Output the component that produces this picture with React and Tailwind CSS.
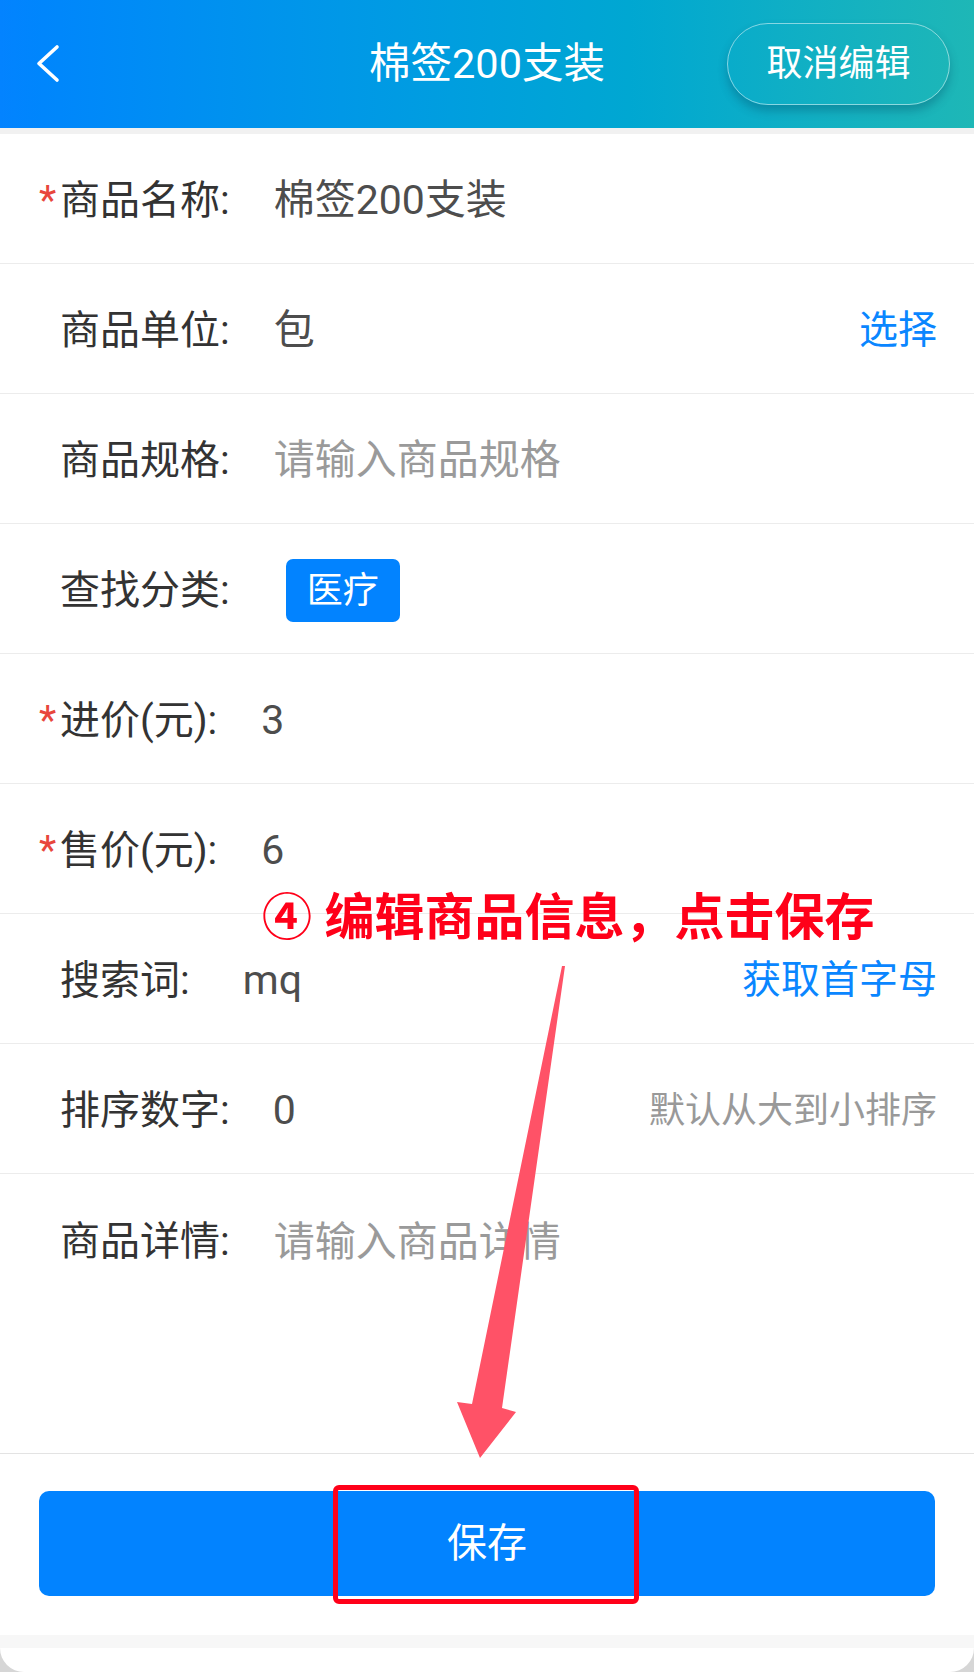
import React from 'react';

const rows = [
  { label: '商品名称:', required: true, value: '棉签200支装', gap: 'ml-[44px]' },
  { label: '商品单位:', value: '包', gap: 'ml-[44px]', action: '选择' },
  { label: '商品规格:', placeholder: '请输入商品规格', gap: 'ml-[44px]' },
  { label: '查找分类:', tag: '医疗', gap: 'ml-[56px]' },
  { label: '进价(元):', required: true, value: '3', gap: 'ml-[44px]' },
  { label: '售价(元):', required: true, value: '6', gap: 'ml-[44px]' },
  { label: '搜索词:', value: 'mq', gap: 'ml-[53px]', action: '获取首字母' },
  { label: '排序数字:', value: '0', gap: 'ml-[43px]', hint: '默认从大到小排序' },
];

function Row({ label, required, value, placeholder, tag, gap, action, hint }) {
  return (
    <div className="h-[130px] flex items-center pt-[4px] pl-[39px] pr-[37px] border-b border-[#ececec]">
      <span className="w-[21px] text-[40px] text-[#e8463c] leading-none">{required ? '*' : ''}</span>
      <span className="text-[40px] text-[#333333]">{label}</span>
      <div className={gap}>
        {tag ? (
          <span className="inline-flex items-center justify-center h-[63px] w-[114px] rounded-[7px] bg-[#0283ff] text-white text-[36px]">
            {tag}
          </span>
        ) : placeholder ? (
          <span className="text-[41px] text-[#9a9a9a]">{placeholder}</span>
        ) : (
          <span className="text-[41px] text-[#4d4d4d]">{value}</span>
        )}
      </div>
      {action && <span className="ml-auto text-[39px] text-[#0a86ff]">{action}</span>}
      {hint && <span className="ml-auto text-[36px] text-[#999999]">{hint}</span>}
    </div>
  );
}

export default function App() {
  return (
    <div
      className="relative w-[974px] h-[1672px] overflow-hidden bg-[#d6d6d6] flex flex-col"
      style={{ fontFamily: 'Roboto, "Noto Sans CJK SC", sans-serif' }}
    >
      <header className="h-[128px] shrink-0 grid grid-cols-[1fr_auto_1fr] items-center bg-linear-to-r from-[#0383ff] to-[#1eb7b6]">
        <div className="pl-[36px] flex items-center">
          <svg width="24" height="40" viewBox="0 0 24 40" fill="none" stroke="white" strokeWidth="3.6" strokeLinecap="round" strokeLinejoin="round">
            <path d="M21 3 L3 19.5 L21 36" />
          </svg>
        </div>
        <h1 className="text-[41.5px] text-white font-normal">棉签200支装</h1>
        <div className="flex justify-end pr-[24px]">
          <button className="w-[223px] h-[82px] rounded-full border border-white/50 text-white text-[36px] shadow-[0_6px_10px_rgba(0,60,90,0.3)]">
            取消编辑
          </button>
        </div>
      </header>
      <div className="h-[6px] shrink-0 bg-[#f1f1f1]" />

      <main className="bg-white flex flex-col">
        {rows.map((r) => (
          <Row key={r.label} {...r} />
        ))}
        <div className="h-[279px] flex items-start pt-[38px] pl-[39px] pr-[37px]">
          <span className="w-[21px]" />
          <span className="text-[40px] text-[#333333]">商品详情:</span>
          <span className="ml-[44px] text-[41px] text-[#9a9a9a]">请输入商品详情</span>
        </div>
        <div className="border-t border-[#e3e3e3] pt-[37px] pb-[39px] px-[39px]">
          <button className="w-full h-[105px] rounded-[10px] bg-[#0283ff] text-white text-[40px]">保存</button>
        </div>
      </main>
      <div className="h-[13px] shrink-0 bg-[#f7f7f7]" />
      <div className="flex-1 bg-white rounded-b-[24px]" />

      {/* tutorial overlay */}
      <div className="absolute left-[262px] top-[893px] text-[50px] font-semibold text-[#ff0019] leading-none whitespace-nowrap">
        ④ 编辑商品信息，点击保存
      </div>
      <svg className="absolute left-0 top-0 pointer-events-none" width="974" height="1672" viewBox="0 0 974 1672">
        <polygon points="562,966 565,966 502,1408 516,1412 480,1458 457,1402 472,1404" fill="#ff5267" />
      </svg>
      <div className="absolute left-[333px] top-[1485px] w-[306px] h-[119px] border-[5px] border-[#ff0019] rounded-[6px]" />
    </div>
  );
}
